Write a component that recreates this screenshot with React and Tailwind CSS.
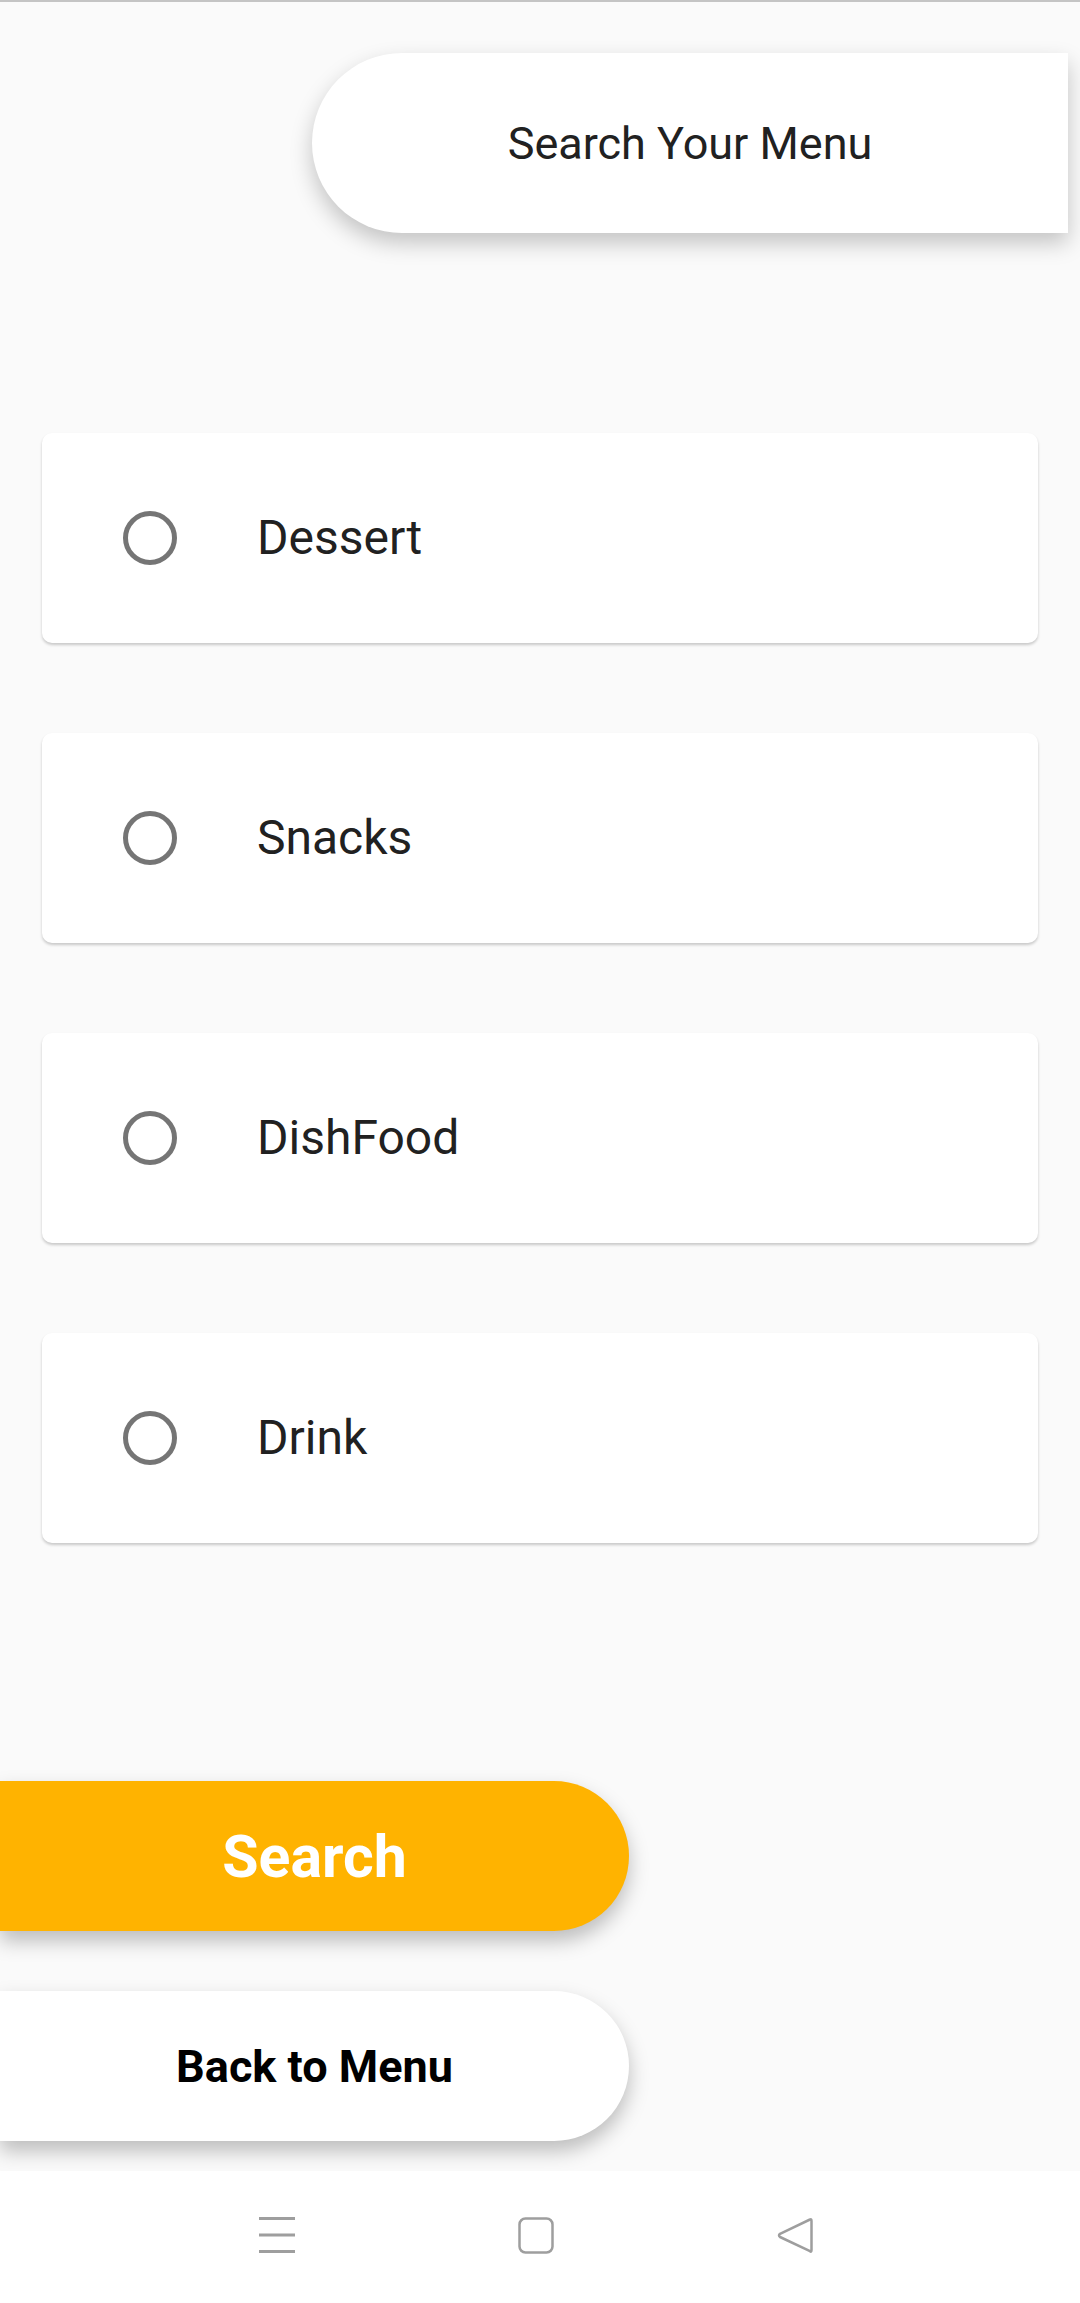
import React, { useState } from "react";

const categories = ["Dessert", "Snacks", "DishFood", "Drink"];

const App = () => {
  const [selected, setSelected] = useState(null);

  return (
    <div
      className="w-[1080px] h-[2303px] bg-[#fafafa] flex flex-col overflow-hidden border-t-2 border-[#c4c4c4]"
      style={{ fontFamily: "Roboto, 'Noto Sans', sans-serif" }}
    >
      {/* title pill */}
      <div className="flex justify-end pr-[12px] pt-[51px]">
        <div className="w-[756px] h-[180px] bg-white rounded-l-[90px] flex items-center justify-center shadow-[0_10px_22px_rgba(0,0,0,0.22)]">
          <span className="text-[45px] text-[#212121] leading-none">
            Search Your Menu
          </span>
        </div>
      </div>

      {/* category list */}
      <div className="flex flex-col gap-[90px] px-[42px] mt-[200px]">
        {categories.map((name) => (
          <button
            key={name}
            onClick={() => setSelected(name)}
            className="h-[210px] bg-white rounded-[10px] flex items-center pl-[81px] shadow-[0_2px_3px_rgba(0,0,0,0.2)] text-left"
          >
            <span
              className={
                selected === name
                  ? "w-[54px] h-[54px] rounded-full border-[5px] border-[#ffb300] flex items-center justify-center"
                  : "w-[54px] h-[54px] rounded-full border-[5px] border-[#757575] flex items-center justify-center"
              }
            >
              {selected === name && (
                <span className="w-[26px] h-[26px] rounded-full bg-[#ffb300]" />
              )}
            </span>
            <span className="ml-[80px] text-[48px] text-[#212121] leading-none">
              {name}
            </span>
          </button>
        ))}
      </div>

      {/* actions */}
      <div className="flex flex-col gap-[60px] mt-[238px]">
        <button className="w-[629px] h-[150px] bg-[#ffb300] rounded-r-[75px] flex items-center justify-center shadow-[0_10px_20px_rgba(0,0,0,0.25)]">
          <span className="text-[59px] font-bold text-white leading-none">
            Search
          </span>
        </button>
        <button className="w-[629px] h-[150px] bg-white rounded-r-[75px] flex items-center justify-center shadow-[0_10px_20px_rgba(0,0,0,0.25)]">
          <span className="text-[45px] font-bold text-black leading-none">
            Back to Menu
          </span>
        </button>
      </div>

      {/* system nav bar */}
      <div className="relative z-10 mt-auto h-[132px] bg-white flex items-center justify-center gap-[223px] pb-[4px] pr-[8px]">
        <svg width="36" height="36" viewBox="0 0 36 36">
          <path d="M0 1.5H36M0 18H36M0 34.5H36" stroke="#9e9e9e" strokeWidth="3" />
        </svg>
        <svg width="36" height="37" viewBox="0 0 36 37">
          <rect x="1.5" y="1.5" width="33" height="34" rx="6" fill="none" stroke="#9e9e9e" strokeWidth="2.5" />
        </svg>
        <svg width="36" height="37" viewBox="0 0 36 37">
          <path d="M33 2.5 Q34.5 1.5 34.5 4 V33 Q34.5 35.5 33 34.2 L3 20 Q1 18.5 3 16.8 Z" fill="none" stroke="#9e9e9e" strokeWidth="2.5" strokeLinejoin="round" />
        </svg>
      </div>
    </div>
  );
};

export default App;
